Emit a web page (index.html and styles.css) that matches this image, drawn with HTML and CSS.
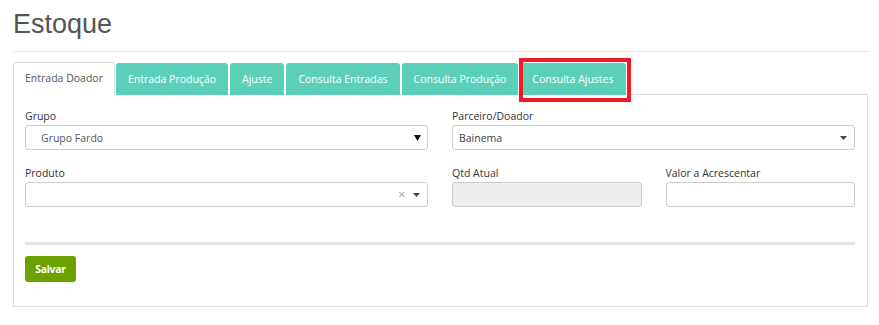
FILE: index.html
```html
<!DOCTYPE html>
<html lang="pt-BR">
<head>
<meta charset="utf-8">
<title>Estoque</title>
<link rel="stylesheet" href="styles.css">
</head>
<body>
<div class="page">
  <h1 class="title">Estoque</h1>
  <hr class="title-rule">
  <ul class="tabs">
    <li class="tab active">Entrada Doador</li>
    <li class="tab">Entrada Produção</li>
    <li class="tab">Ajuste</li>
    <li class="tab">Consulta Entradas</li>
    <li class="tab">Consulta Produção</li>
    <li class="tab highlighted">Consulta Ajustes<span class="highlight-box"></span></li>
  </ul>
  <div class="panel">
    <div class="form-grid">
      <div class="field">
        <label class="label">Grupo</label>
        <div class="control select native">
          <span class="value indent">Grupo Fardo</span>
          <svg class="tri-big" width="7" height="6" viewBox="0 0 7 6"><path d="M0 0H7L3.5 6Z" fill="#111"/></svg>
        </div>
      </div>
      <div class="field">
        <label class="label">Parceiro/Doador</label>
        <div class="control select">
          <span class="value">Bainema</span>
          <svg class="caret" width="7" height="4" viewBox="0 0 7 4"><path d="M0 0H7L3.5 4Z" fill="#444"/></svg>
        </div>
      </div>
      <div class="field">
        <label class="label">Produto</label>
        <div class="control select">
          <span class="value"></span>
          <span class="clear">×</span>
          <svg class="caret" width="7" height="4" viewBox="0 0 7 4"><path d="M0 0H7L3.5 4Z" fill="#444"/></svg>
        </div>
      </div>
      <div class="sub-grid">
        <div class="field">
          <label class="label">Qtd Atual</label>
          <div class="control disabled"></div>
        </div>
        <div class="field">
          <label class="label">Valor a Acrescentar</label>
          <div class="control"></div>
        </div>
      </div>
    </div>
    <div class="separator"></div>
    <button class="btn-save">Salvar</button>
  </div>
</div>
</body>
</html>
```
FILE: styles.css
```css
* { box-sizing: border-box; }
html, body { margin: 0; padding: 0; background: #fff; }
body { font-family: "Open Sans", "DejaVu Sans", sans-serif; color: #333; }

.page { padding: 8px 11px 0 13px; }

.title {
  margin: 0;
  font-family: "Liberation Sans", Arial, sans-serif;
  font-weight: normal;
  font-size: 27px;
  line-height: 32px;
  color: #555;
}

.title-rule {
  margin: 11px 0 11px 0;
  border: 0;
  border-top: 1px solid #e6e6e6;
  height: 0;
}

.tabs {
  list-style: none;
  margin: 0;
  padding: 0;
  display: flex;
  align-items: flex-end;
  height: 32px;
  position: relative;
  z-index: 1;
}

.tab {
  height: 32px;
  padding: 0 12px;
  margin-right: 2px;
  font-size: 10.5px;
  line-height: 32px;
  color: #fff;
  background: #5ccfb8;
  border-radius: 3px 3px 0 0;
  white-space: nowrap;
}

.tab.active {
  background: #fff;
  color: #555;
  border: 1px solid #ddd;
  border-bottom-color: #fff;
  line-height: 31px;
  height: 33px;
  margin-right: 1px;
  padding: 0 11px;
}

.tab.highlighted { position: relative; }

.highlight-box {
  position: absolute;
  top: -5px;
  left: -1px;
  right: -5px;
  bottom: -7px;
  border: 4px solid #ed1c24;
  pointer-events: none;
}

.panel {
  border: 1px solid #ddd;
  margin-top: -1px;
  box-shadow: 0 1px 0 #dcdcdc;
  padding: 14px 12px 24px 11px;
}

.form-grid {
  display: grid;
  grid-template-columns: 1fr 1fr;
  column-gap: 24px;
  row-gap: 16px;
}

.sub-grid {
  display: grid;
  grid-template-columns: 1fr 1fr;
  column-gap: 24px;
}

.field { display: flex; flex-direction: column; }

.label {
  font-size: 10.5px;
  line-height: 15px;
  color: #333;
  margin-bottom: 1px;
}

.control {
  height: 25px;
  border: 1px solid #ccc;
  border-radius: 3px;
  background: #fff;
  display: flex;
  align-items: center;
  padding: 0 6px;
}

.control.disabled { background: #eee; }

.value {
  flex: 1;
  font-size: 10.5px;
  color: #444;
}

.value.indent { padding-left: 9px; color: #555; }

.clear {
  font-size: 12px;
  color: #999;
  margin-right: 8px;
  line-height: 1;
}

.caret { margin-right: 1px; }

.separator {
  height: 3px;
  background: #e3e3e3;
  margin: 35px 0 11px 0;
}

.btn-save {
  display: block;
  height: 26px;
  width: 51px;
  padding: 0;
  border: 0;
  border-radius: 3px;
  background: #6aa300;
  color: #fff;
  font-family: "Open Sans", sans-serif;
  font-weight: bold;
  font-size: 10.5px;
  letter-spacing: -0.3px;
}
```
